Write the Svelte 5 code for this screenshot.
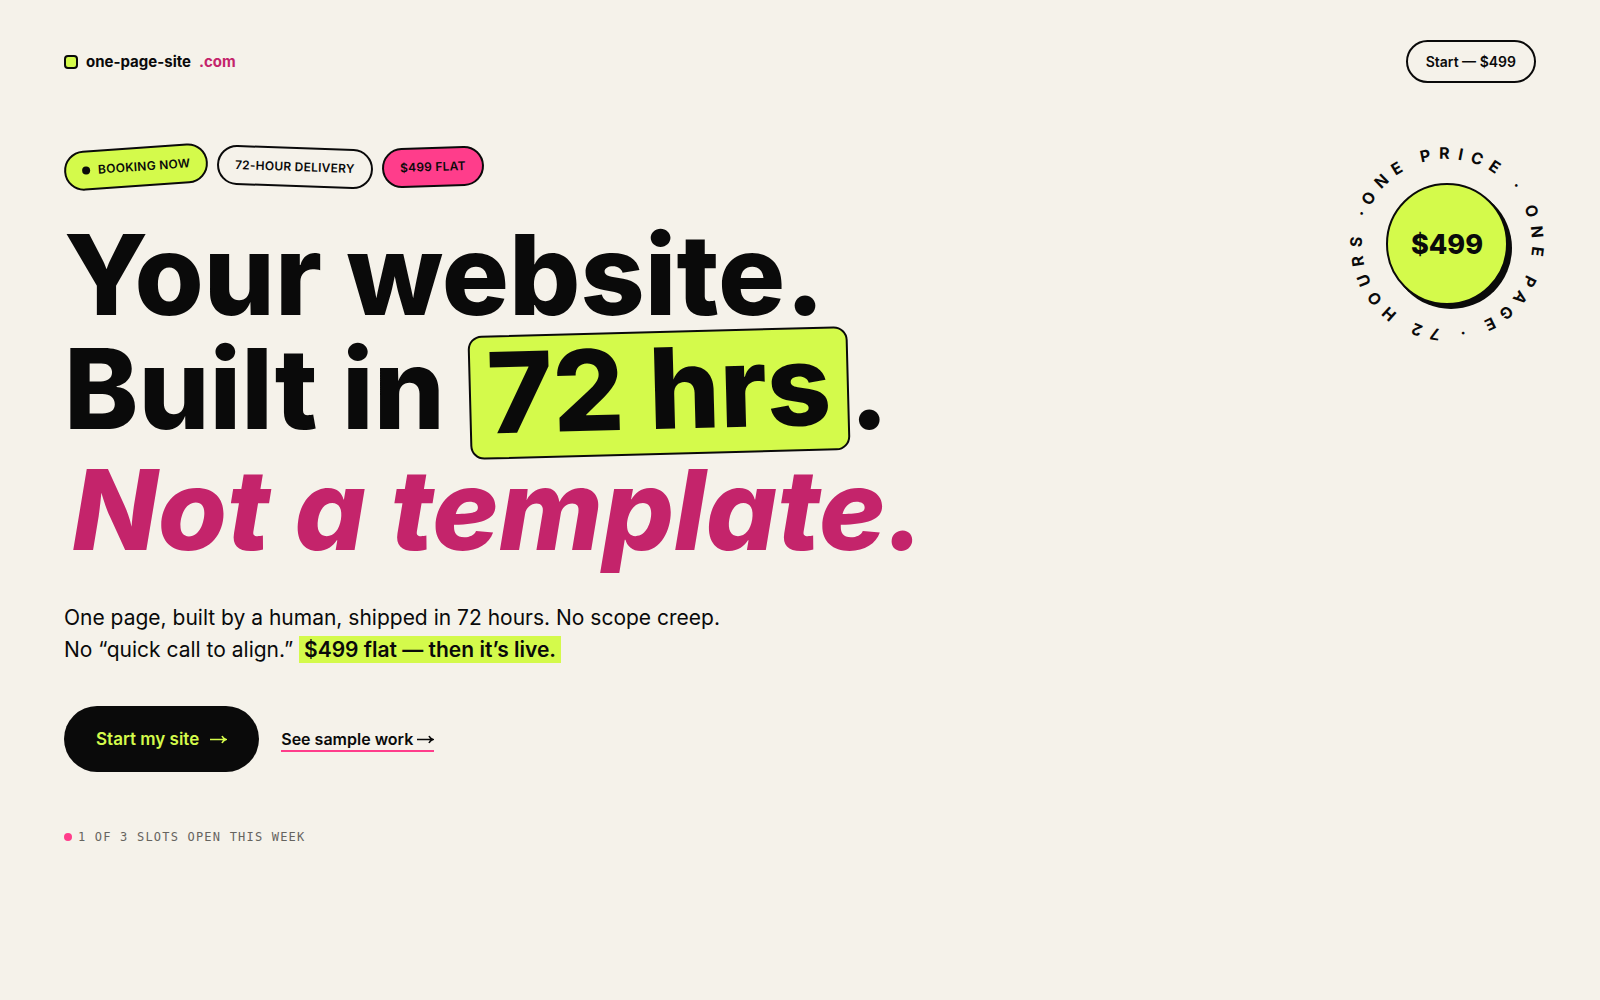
<script lang="ts">
  const price = '$499';
  const ring = 'ONE PRICE · ONE PAGE · 72 HOURS ·';
</script>

{#snippet arrow()}
  <svg class="arrow" viewBox="0 0 18 12" aria-hidden="true">
    <path d="M1 6.5h16M13 3q1 2.5 4 3.5q-3 1-4 3.5" />
  </svg>
{/snippet}

<header>
  <a class="logo" href="/">
    <span class="mark"></span>
    <span>one-page-site</span>
    <span class="tld">.com</span>
  </a>
  <a class="nav-cta" href="#start">Start — {price}</a>
</header>

<main>
  <div class="badge">
    <svg viewBox="0 0 200 200" aria-label={ring}>
      <defs>
        <!-- runs past a full turn so the last dot is not cut off -->
        <path id="ring" d="M15 100 a85 85 0 1 1 170 0 a85 85 0 1 1 -170 0 a85 85 0 0 1 85 -85" />
      </defs>
      <text transform="rotate(26 100 100)"><textPath href="#ring">{ring}</textPath></text>
    </svg>
    <div class="coin">{price}</div>
  </div>

  <ul class="pills">
    <li class="pill lime"><span class="dot"></span>Booking now</li>
    <li class="pill">72-hour delivery</li>
    <li class="pill pink">{price} flat</li>
  </ul>

  <h1>
    <span class="line">Your website.</span>
    <span class="line">Built in <span class="box">72 hrs</span>.</span>
    <em class="line">Not a template.</em>
  </h1>

  <p class="lead">
    One page, built by a human, shipped in 72 hours. No scope creep.<br />
    No “quick call to align.” <mark>{price} flat — then it’s live.</mark>
  </p>

  <div class="actions">
    <a class="start" href="#start">Start my site {@render arrow()}</a>
    <a class="sample" href="#work">See sample work {@render arrow()}</a>
  </div>

  <p class="slots"><span class="dot"></span>1 of 3 slots open this week</p>
</main>

<style>
  :global(body) {
    background: #f5f2ea;
    color: #0a0a0a;
    font-family: Inter, 'Liberation Sans', sans-serif;
  }

  a {
    color: inherit;
    text-decoration: none;
  }

  header {
    display: flex;
    justify-content: space-between;
    align-items: center;
    padding: 40px 64px 0;
  }

  .logo {
    display: flex;
    align-items: center;
    gap: 8px;
    font-size: 15px;
    font-weight: 700;
  }

  .mark {
    box-sizing: border-box;
    width: 14px;
    height: 14px;
    border: 2px solid #0a0a0a;
    border-radius: 4px;
    background: #d4fa4b;
  }

  .tld {
    color: #c4246b;
  }

  .nav-cta {
    padding: 10px 18px;
    border: 2px solid #0a0a0a;
    border-radius: 22px;
    font-size: 14px;
    font-weight: 600;
    line-height: 19px;
  }

  main {
    position: relative;
    padding: 64px;
  }

  .badge {
    position: absolute;
    top: 61px;
    right: 53px;
    display: grid;
    place-items: center;
    width: 200px;
    height: 200px;
  }

  .badge svg {
    position: absolute;
    inset: 0;
    overflow: visible;
  }

  .badge text {
    font-size: 16px;
    font-weight: 700;
    letter-spacing: 0.48em;
    fill: #0a0a0a;
  }

  .coin {
    box-sizing: border-box;
    display: grid;
    place-items: center;
    width: 122px;
    height: 122px;
    border: 2px solid #0a0a0a;
    border-radius: 50%;
    background: #d4fa4b;
    box-shadow: 4px 4px 0 #0a0a0a;
    font-size: 27px;
    font-weight: 800;
  }

  .pills {
    display: flex;
    flex-wrap: wrap;
    gap: 9px;
    margin: 0;
    padding: 0;
    list-style: none;
  }

  .pill {
    display: flex;
    align-items: center;
    gap: 8px;
    padding: 10px 16px;
    border: 2px solid #0a0a0a;
    border-radius: 20px;
    font-size: 12px;
    font-weight: 600;
    line-height: 16px;
    letter-spacing: 0.02em;
    text-transform: uppercase;
    transform: rotate(2deg);
  }

  .pill.lime {
    background: #d4fa4b;
    transform: rotate(-4deg);
  }

  .pill.pink {
    background: #ff3d8b;
    transform: rotate(-2deg);
  }

  .dot {
    width: 8px;
    height: 8px;
    border-radius: 50%;
    background: #0a0a0a;
  }

  h1 {
    margin: 30px 0 0;
    font-size: 112px;
    font-weight: 800;
    line-height: 114px;
  }

  .line {
    display: block;
  }

  em {
    padding-left: 8px;
    color: #c4246b;
  }

  .box {
    display: inline-block;
    margin-bottom: -3px;
    padding: 0 16px 10px;
    border: 2px solid #0a0a0a;
    border-radius: 14px;
    background: #d4fa4b;
    line-height: 110px;
    transform: rotate(-1.5deg);
  }

  .lead {
    margin: 36px 0 0;
    font-size: 21px;
    line-height: 32px;
  }

  mark {
    padding: 1px 5px;
    background: #d4fa4b;
    color: inherit;
    font-weight: 600;
  }

  .actions {
    display: flex;
    align-items: center;
    gap: 22px;
    margin-top: 40px;
    font-size: 16px;
    font-weight: 600;
    line-height: 22px;
  }

  .actions a {
    display: flex;
    align-items: center;
    gap: 3px;
  }

  .actions .start {
    gap: 10px;
    padding: 22px 32px;
    border-radius: 33px;
    background: #0a0a0a;
    color: #d4fa4b;
    font-size: 17px;
  }

  .sample {
    padding-top: 2px;
    border-bottom: 2px solid #ff3d8b;
  }

  .arrow {
    width: 18px;
    height: 12px;
    fill: none;
    stroke: currentColor;
    stroke-width: 1.6;
  }

  .slots {
    display: flex;
    align-items: center;
    gap: 6px;
    margin: 56px 0 0;
    color: #66645f;
    font-family: 'DejaVu Sans Mono', monospace;
    font-size: 12px;
    line-height: 18px;
    letter-spacing: 0.1em;
    text-transform: uppercase;
  }

  .slots .dot {
    background: #ff3d8b;
  }
</style>
